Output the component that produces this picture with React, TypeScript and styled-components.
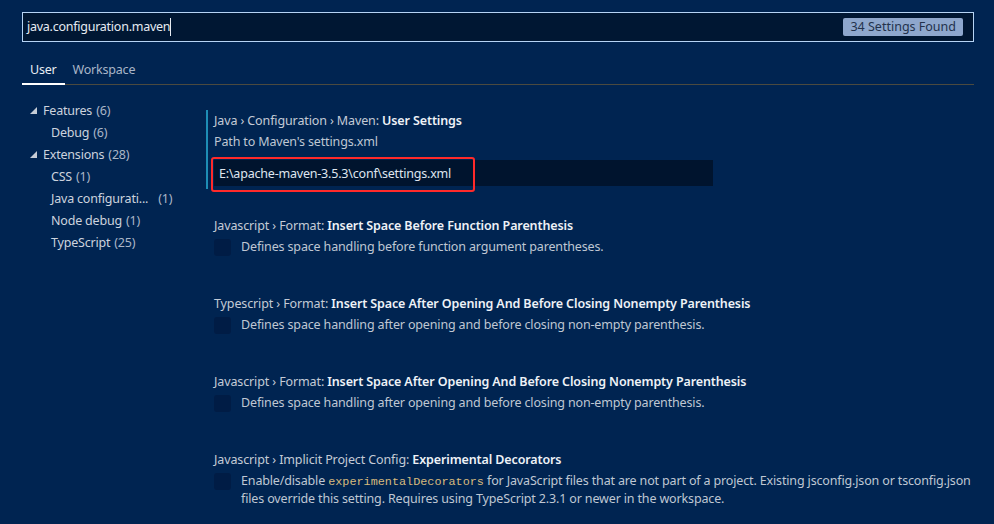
import React from "react";
import styled, { createGlobalStyle } from "styled-components";

const Global = createGlobalStyle`
  html, body { margin: 0; padding: 0; background: #002451; }
  body { font-family: "Noto Sans", "Open Sans", sans-serif; color: #ccd2dc; }
`;

const Page = styled.div`
  width: 994px;
  height: 524px;
  box-sizing: border-box;
  padding: 12px 20px 0 22px;
  background: #002451;
  overflow: hidden;
`;

const SearchBox = styled.div`
  height: 30px;
  box-sizing: border-box;
  border: 1px solid #b6d4f5;
  background: #001733;
  display: flex;
  align-items: center;
  justify-content: space-between;
  padding: 0 10px 0 4px;
`;

const SearchText = styled.span`
  font-size: 12.5px;
  color: #e6ebf2;
  letter-spacing: -0.25px;
  border-right: 1px solid #e6ebf2;
  line-height: 18px;
`;

const Badge = styled.span`
  background: #8ea7cd;
  color: #23324c;
  font-size: 12.5px;
  height: 18px;
  line-height: 18px;
  padding: 0 7px;
  border-radius: 2px;
`;

const TabBar = styled.div`
  display: flex;
  margin-top: 14px;
  border-bottom: 1px solid #4b4a3f;
  height: 29px;
  box-sizing: border-box;
`;

const Tab = styled.div<{ $active?: boolean }>`
  font-size: 12.5px;
  padding: 5px 8px 0 8px;
  color: ${(p) => (p.$active ? "#e8edf3" : "#a9b6c8")};
  border-bottom: ${(p) => (p.$active ? "2px solid #ffffff" : "2px solid transparent")};
  margin-bottom: -1px;
  letter-spacing: -0.2px;
`;

const Body = styled.div`
  display: grid;
  grid-template-columns: 184px 1fr;
  margin-top: 10px;
`;

const Tree = styled.div`
  display: flex;
  flex-direction: column;
  padding-top: 4px;
`;

const TreeRow = styled.div<{ $depth: number }>`
  height: 22px;
  display: flex;
  align-items: center;
  font-size: 12.5px;
  color: #ccd3de;
  padding-left: ${(p) => (p.$depth === 0 ? 8 : 29)}px;
  letter-spacing: -0.2px;
  white-space: nowrap;
`;

const Twisty = styled.svg`
  width: 7px;
  height: 7px;
  margin-right: 6px;
  flex: none;
`;

const Count = styled.span`
  color: #aab6c7;
  margin-left: 4px;
`;

const Settings = styled.div`
  display: flex;
  flex-direction: column;
  padding-top: 15px;
`;

const Setting = styled.div<{ $h: number }>`
  padding-left: 8px;
  height: ${(p) => p.$h}px;
  box-sizing: border-box;
`;

const Focused = styled.div`
  border-left: 2px solid #1e8db5;
  margin-left: -8px;
  padding-left: 6px;
  padding-top: 2px;
  padding-bottom: 3px;
`;

const Title = styled.div`
  font-size: 12.5px;
  color: #c4cbd6;
  line-height: 18px;
  letter-spacing: -0.12px;
  white-space: nowrap;
`;

const Name = styled.span`
  font-weight: 600;
  color: #eef2f7;
`;

const Desc = styled.div`
  font-size: 12.5px;
  color: #bfc7d3;
  line-height: 18px;
  letter-spacing: -0.15px;
  margin-top: 3px;
`;

const InputWrap = styled.div`
  position: relative;
  margin-top: 9px;
  width: 499px;
  height: 26px;
  background: #00142e;
  display: flex;
  align-items: center;
  padding-left: 5px;
  box-sizing: border-box;
  font-size: 12.5px;
  color: #dfe5ee;
  letter-spacing: -0.2px;
`;

const Highlight = styled.div`
  position: absolute;
  left: -3px;
  top: -3px;
  width: 264px;
  height: 35px;
  box-sizing: border-box;
  border: 2.5px solid #ff2a2a;
  border-radius: 3px;
  pointer-events: none;
`;

const CheckRow = styled.div`
  display: flex;
  align-items: flex-start;
  margin-top: 3px;
`;

const Check = styled.div`
  width: 17px;
  height: 17px;
  border-radius: 3px;
  background: #001c45;
  flex: none;
  margin-top: 1px;
  margin-right: 10px;
`;

const CheckDesc = styled.div`
  font-size: 12.5px;
  color: #bfc7d3;
  line-height: 18px;
  letter-spacing: -0.15px;
`;

const Code = styled.span`
  font-family: "Liberation Mono", "DejaVu Sans Mono", monospace;
  font-size: 11.8px;
  line-height: 14px;
  color: #d7ba7d;
  letter-spacing: 0;
`;

const Arrow = () => (
  <Twisty viewBox="0 0 7 7">
    <polygon points="7,0 7,7 0,7" fill="#c5ccd6" />
  </Twisty>
);

const tree = [
  { d: 0, label: "Features", count: "(6)" },
  { d: 1, label: "Debug", count: "(6)" },
  { d: 0, label: "Extensions", count: "(28)" },
  { d: 1, label: "CSS", count: "(1)" },
  { d: 1, label: "Java configurati...", count: "\u00a0\u00a0(1)" },
  { d: 1, label: "Node debug", count: "(1)" },
  { d: 1, label: "TypeScript", count: "(25)" },
];

const checks = [
  {
    cat: "Javascript › Format: ",
    name: "Insert Space Before Function Parenthesis",
    desc: "Defines space handling before function argument parentheses.",
  },
  {
    cat: "Typescript › Format: ",
    name: "Insert Space After Opening And Before Closing Nonempty Parenthesis",
    desc: "Defines space handling after opening and before closing non-empty parenthesis.",
  },
  {
    cat: "Javascript › Format: ",
    name: "Insert Space After Opening And Before Closing Nonempty Parenthesis",
    desc: "Defines space handling after opening and before closing non-empty parenthesis.",
  },
];

export default function App() {
  return (
    <Page>
      <Global />
      <SearchBox>
        <SearchText>java.configuration.maven</SearchText>
        <Badge>34 Settings Found</Badge>
      </SearchBox>
      <TabBar>
        <Tab $active>User</Tab>
        <Tab>Workspace</Tab>
      </TabBar>
      <Body>
        <Tree>
          {tree.map((t, i) => (
            <TreeRow key={i} $depth={t.d}>
              {t.d === 0 && <Arrow />}
              {t.label}
              <Count>{t.count}</Count>
            </TreeRow>
          ))}
        </Tree>
        <Settings>
          <Setting $h={107}>
            <Focused>
              <Title>
                Java › Configuration › Maven: <Name>User Settings</Name>
              </Title>
              <Desc>Path to Maven's settings.xml</Desc>
              <InputWrap>
                E:\apache-maven-3.5.3\conf\settings.xml
                <Highlight />
              </InputWrap>
            </Focused>
          </Setting>
          {checks.map((c, i) => (
            <Setting key={i} $h={78}>
              <Title>
                {c.cat}
                <Name>{c.name}</Name>
              </Title>
              <CheckRow>
                <Check />
                <CheckDesc>{c.desc}</CheckDesc>
              </CheckRow>
            </Setting>
          ))}
          <Setting $h={80}>
            <Title>
              Javascript › Implicit Project Config: <Name>Experimental Decorators</Name>
            </Title>
            <CheckRow>
              <Check />
              <CheckDesc>
                Enable/disable <Code>experimentalDecorators</Code> for JavaScript files that are not
                part of a project. Existing jsconfig.json or tsconfig.json files override this
                setting. Requires using TypeScript 2.3.1 or newer in the workspace.
              </CheckDesc>
            </CheckRow>
          </Setting>
        </Settings>
      </Body>
    </Page>
  );
}
